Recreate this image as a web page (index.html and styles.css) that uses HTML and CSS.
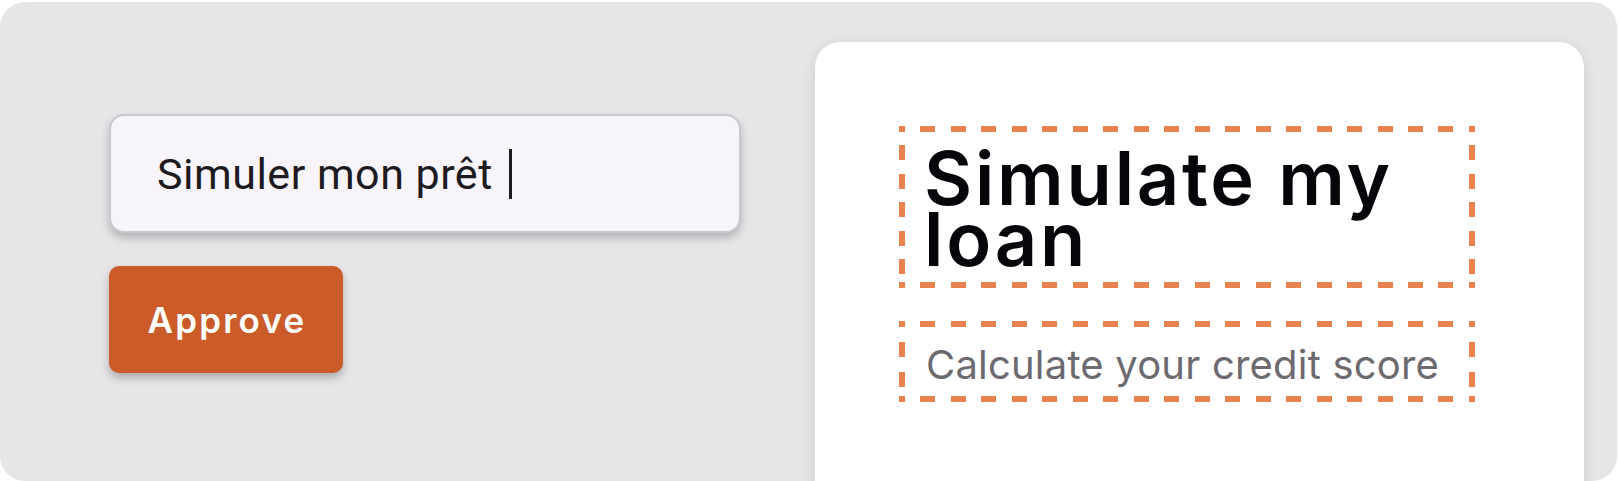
FILE: index.html
```html
<!DOCTYPE html>
<html lang="fr">
<head>
<meta charset="utf-8">
<title>Simuler mon prêt</title>
<link rel="stylesheet" href="styles.css">
</head>
<body>
<div class="stage">
  <div class="controls">
    <div class="field"><span class="field-text">Simuler mon prêt</span><span class="caret"></span></div>
    <div class="btn">Approve</div>
  </div>
  <div class="card">
    <div class="dashed title-box"><h1 class="title">Simulate my loan</h1></div>
    <div class="dashed sub-box"><p class="subtitle">Calculate your credit score</p></div>
  </div>
</div>
</body>
</html>
```
FILE: styles.css
```css
html, body {
  margin: 0;
  padding: 0;
  background: #ffffff;
}

.stage {
  margin-top: 2px;
  width: 1617px;
  height: 479px;
  box-sizing: border-box;
  background: #e7e5e8;
  border-radius: 25px;
  overflow: hidden;
  display: flex;
  align-items: flex-start;
  padding-left: 109px;
}

.controls {
  display: flex;
  flex-direction: column;
  align-items: flex-start;
  gap: 33px;
  padding-top: 112px;
}

.field {
  width: 632px;
  height: 119px;
  box-sizing: border-box;
  border: 2px solid #cac8cc;
  border-radius: 15px;
  background: #f7f5f9;
  box-shadow: 0 5px 8px rgba(0, 0, 0, 0.22);
  display: flex;
  align-items: center;
  padding-left: 46px;
  font-family: Roboto, "Liberation Sans", sans-serif;
  font-size: 43px;
  letter-spacing: 0.5px;
  color: #1d1b20;
}

.caret {
  width: 3px;
  height: 50px;
  background: #1d1b20;
  margin-left: 16px;
}

.btn {
  width: 234px;
  height: 107px;
  box-sizing: border-box;
  background: #cb5b28;
  border-radius: 10px;
  box-shadow: 0 5px 9px rgba(0, 0, 0, 0.25);
  display: flex;
  align-items: center;
  justify-content: center;
  color: #ffffff;
  font-family: Inter, "Noto Sans", sans-serif;
  font-weight: 560;
  font-size: 35px;
  letter-spacing: 2.2px;
  padding-left: 2px;
}

.card {
  flex-shrink: 0;
  margin-left: 74px;
  margin-top: 40px;
  width: 769px;
  height: 520px;
  box-sizing: border-box;
  background: #ffffff;
  border-radius: 25px;
  box-shadow: 0 4px 14px rgba(0, 0, 0, 0.12);
  padding: 84px 0 0 84px;
  display: flex;
  flex-direction: column;
  gap: 33px;
}

.dashed {
  --dash: #e8824f;
  width: 576px;
  box-sizing: border-box;
  background-repeat: no-repeat;
  background-image:
    repeating-linear-gradient(90deg, var(--dash) 0 6px, transparent 6px 21.47px, var(--dash) 21.47px 30.47px),
    repeating-linear-gradient(90deg, var(--dash) 0 6px, transparent 6px 21.47px, var(--dash) 21.47px 30.47px),
    repeating-linear-gradient(180deg, var(--dash) 0 6px, transparent 6px var(--vgap), var(--dash) var(--vgap) var(--vper)),
    repeating-linear-gradient(180deg, var(--dash) 0 6px, transparent 6px var(--vgap), var(--dash) var(--vgap) var(--vper));
  background-size: 100% 6px, 100% 6px, 6px 100%, 6px 100%;
  background-position: 0 0, 0 100%, 0 0, 100% 0;
}

.title-box {
  --vgap: 19.5px;
  --vper: 28.5px;
  height: 162px;
  padding: 22px 18px 0 25px;
}

.title {
  margin: 0;
  font-family: Inter, "Noto Sans", sans-serif;
  font-weight: 560;
  font-size: 74px;
  line-height: 61px;
  letter-spacing: 2.8px;
  color: #060509;
}

.sub-box {
  --vgap: 21px;
  --vper: 30px;
  height: 81px;
  padding: 6px 0 0 27px;
  display: flex;
  align-items: center;
}

.subtitle {
  margin: 0;
  font-family: Inter, "Noto Sans", sans-serif;
  font-weight: 400;
  font-size: 40px;
  letter-spacing: 0.2px;
  color: #6c6a6f;
  white-space: nowrap;
}
```
